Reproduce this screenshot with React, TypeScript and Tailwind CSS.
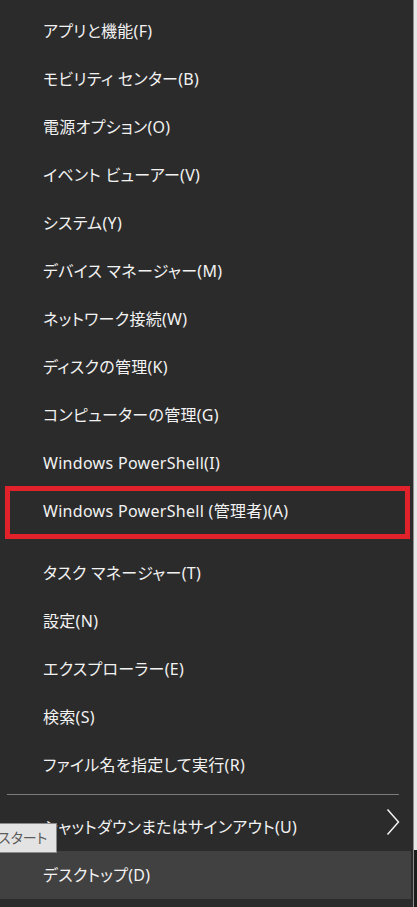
import React from 'react';

type Item = { label: string; active?: boolean; boxed?: boolean; submenu?: boolean };

const groups: Item[][] = [
  [
    { label: 'アプリと機能(F)' },
    { label: 'モビリティ センター(B)' },
    { label: '電源オプション(O)' },
    { label: 'イベント ビューアー(V)' },
    { label: 'システム(Y)' },
    { label: 'デバイス マネージャー(M)' },
    { label: 'ネットワーク接続(W)' },
    { label: 'ディスクの管理(K)' },
    { label: 'コンピューターの管理(G)' },
    { label: 'Windows PowerShell(I)' },
    { label: 'Windows PowerShell (管理者)(A)', boxed: true },
  ],
  [
    { label: 'タスク マネージャー(T)' },
    { label: '設定(N)' },
    { label: 'エクスプローラー(E)' },
    { label: '検索(S)' },
    { label: 'ファイル名を指定して実行(R)' },
  ],
  [
    { label: 'シャットダウンまたはサインアウト(U)', submenu: true },
    { label: 'デスクトップ(D)', active: true },
  ],
];

function MenuRow({ item }: { item: Item }) {
  return (
    <div
      className={`relative flex items-center h-[48px] pl-[43px] text-[16px] leading-none tracking-[0.3px] text-[#f2f2f2] ${
        item.active ? 'bg-[#414141] mr-[2px]' : ''
      }`}
    >
      <span>{item.label}</span>
      {item.submenu && (
        <svg
          className="absolute left-[386px] top-[5px]"
          width="14"
          height="28"
          viewBox="0 0 14 28"
          fill="none"
        >
          <path d="M1.5 1.5 L12.5 14 L1.5 26.5" stroke="#f2f2f2" strokeWidth="1.5" />
        </svg>
      )}
      {item.boxed && (
        <div className="absolute left-[5px] top-[-1px] w-[405px] h-[53px] border-[5px] border-[#e2222b]" />
      )}
    </div>
  );
}

export default function App() {
  return (
    <div
      className="flex w-[417px] h-[907px] overflow-hidden bg-[#2b2b2b] [font-feature-settings:'palt']"
      style={{ fontFamily: '"Noto Sans", "Noto Sans CJK JP", sans-serif' }}
    >
      <div className="relative w-[413px] pt-[7px] bg-[#2b2b2b]">
        {groups.map((group, gi) => (
          <div key={gi}>
            {gi === 1 && <div className="h-[14px]" />}
            {gi === 2 && (
              <div className="h-[14px] pt-[5px]">
                <div className="mx-[7px] w-[392px] h-px bg-[#7a7a7a]" />
              </div>
            )}
            {group.map((item) => (
              <MenuRow key={item.label} item={item} />
            ))}
          </div>
        ))}

        {/* tooltip */}
        <div className="absolute left-0 top-[823px] w-[57px] h-[30px] flex items-center bg-[#e3e3e3] border border-l-0 border-[#8a8a8a] overflow-hidden">
          <span className="ml-[-2px] whitespace-nowrap text-[14px] leading-none text-[#5c5c5c]">スタート</span>
        </div>
      </div>

      {/* window behind */}
      <div className="flex flex-col w-[4px] border-l border-[#8f8f8f]">
        <div className="h-[850px] bg-[#e6e6e6]" />
        <div className="flex-1 bg-[#1c1c1c]" />
      </div>
    </div>
  );
}
